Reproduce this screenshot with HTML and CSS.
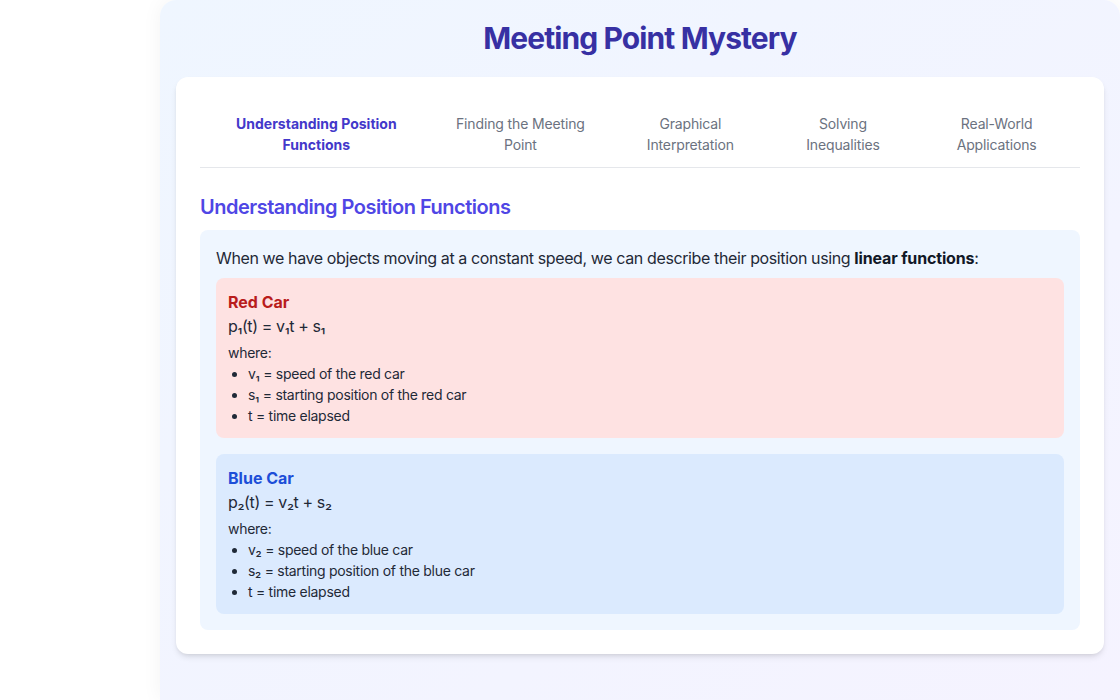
FILE: index.html
```html
<!DOCTYPE html>
<html lang="en">
<head>
    <meta charset="UTF-8">
    <meta name="viewport" content="width=device-width, initial-scale=1.0">
    <title>Meeting Point Mystery</title>
    <link rel="stylesheet" href="styles.css">
</head>
<body>
    <main class="lesson">
        <h1 class="lesson-title">Meeting Point Mystery</h1>

        <section class="card">
            <nav class="tabs">
                <button class="tab active">Understanding Position Functions</button>
                <button class="tab">Finding the Meeting Point</button>
                <button class="tab">Graphical Interpretation</button>
                <button class="tab">Solving Inequalities</button>
                <button class="tab">Real-World Applications</button>
            </nav>

            <h2 class="section-title">Understanding Position Functions</h2>

            <div class="explain">
                <p class="intro">When we have objects moving at a constant speed, we can describe their position using <strong>linear functions</strong>:</p>

                <div class="car red">
                    <h3 class="car-name">Red Car</h3>
                    <p class="formula">p₁(t) = v₁t + s₁</p>
                    <p class="where">where:</p>
                    <ul class="terms">
                        <li>v₁ = speed of the red car</li>
                        <li>s₁ = starting position of the red car</li>
                        <li>t = time elapsed</li>
                    </ul>
                </div>

                <div class="car blue">
                    <h3 class="car-name">Blue Car</h3>
                    <p class="formula">p₂(t) = v₂t + s₂</p>
                    <p class="where">where:</p>
                    <ul class="terms">
                        <li>v₂ = speed of the blue car</li>
                        <li>s₂ = starting position of the blue car</li>
                        <li>t = time elapsed</li>
                    </ul>
                </div>
            </div>
        </section>
    </main>

    <script>
        document.querySelectorAll('.tab').forEach(function (tab) {
            tab.addEventListener('click', function () {
                document.querySelector('.tab.active').classList.remove('active');
                tab.classList.add('active');
            });
        });
    </script>
</body>
</html>
```

FILE: styles.css
```css
* {
    box-sizing: border-box;
}
body {
    margin: 0;
    background: #ffffff;
    font-family: Inter, "Noto Sans", sans-serif;
    line-height: 1.5;
    color: #1f2937;
}
h1, h2, h3, p, ul {
    margin: 0;
}
.lesson {
    width: 960px;
    min-height: 100vh;
    margin-left: auto;
    padding: 16px;
    border-radius: 16px 16px 0 0;
    background: linear-gradient(to bottom right, #eff6ff, #f5f3ff);
    box-shadow: 0 0 20px rgba(0, 0, 0, 0.05);
}
.lesson-title {
    font-size: 30px;
    font-weight: 700;
    letter-spacing: -0.03em;
    color: #3730a3;
    text-align: center;
    margin-bottom: 16px;
}
.card {
    background: #ffffff;
    border-radius: 12px;
    padding: 24px;
    box-shadow: 0 4px 6px -1px rgba(0, 0, 0, 0.1), 0 2px 4px -2px rgba(0, 0, 0, 0.1);
}
.tabs {
    display: flex;
    border-bottom: 1px solid #e5e7eb;
    margin-bottom: 24px;
}
.tab {
    padding: 12px 16px;
    border: none;
    background: none;
    font-family: inherit;
    font-size: 14px;
    line-height: 1.5;
    letter-spacing: -0.01em;
    color: #6b7280;
    text-align: center;
    cursor: pointer;
}
.tab:hover {
    color: #4338ca;
}
.tab.active {
    color: #4338ca;
    font-weight: 700;
    letter-spacing: 0;
}
.section-title {
    font-size: 20px;
    font-weight: 600;
    letter-spacing: -0.025em;
    color: #4f46e5;
    margin-bottom: 8px;
}
.explain {
    background: #eff6ff;
    border-radius: 8px;
    padding: 16px;
}
.intro {
    font-size: 16px;
    letter-spacing: -0.024em;
    margin-bottom: 8px;
}
.intro strong {
    font-weight: 700;
    letter-spacing: -0.01em;
    color: #111827;
}
.car {
    padding: 12px;
    border-radius: 8px;
}
.car + .car {
    margin-top: 16px;
}
.car-name {
    font-size: 16px;
    font-weight: 700;
}
.red {
    background: #fee2e2;
}
.red .car-name {
    color: #b91c1c;
}
.blue {
    background: #dbeafe;
}
.blue .car-name {
    color: #1d4ed8;
}
.formula {
    font-size: 16px;
    letter-spacing: -0.024em;
    margin-bottom: 4px;
}
.where {
    font-size: 14px;
    letter-spacing: -0.02em;
}
.terms {
    font-size: 14px;
    letter-spacing: -0.02em;
    padding-left: 20px;
}
```
